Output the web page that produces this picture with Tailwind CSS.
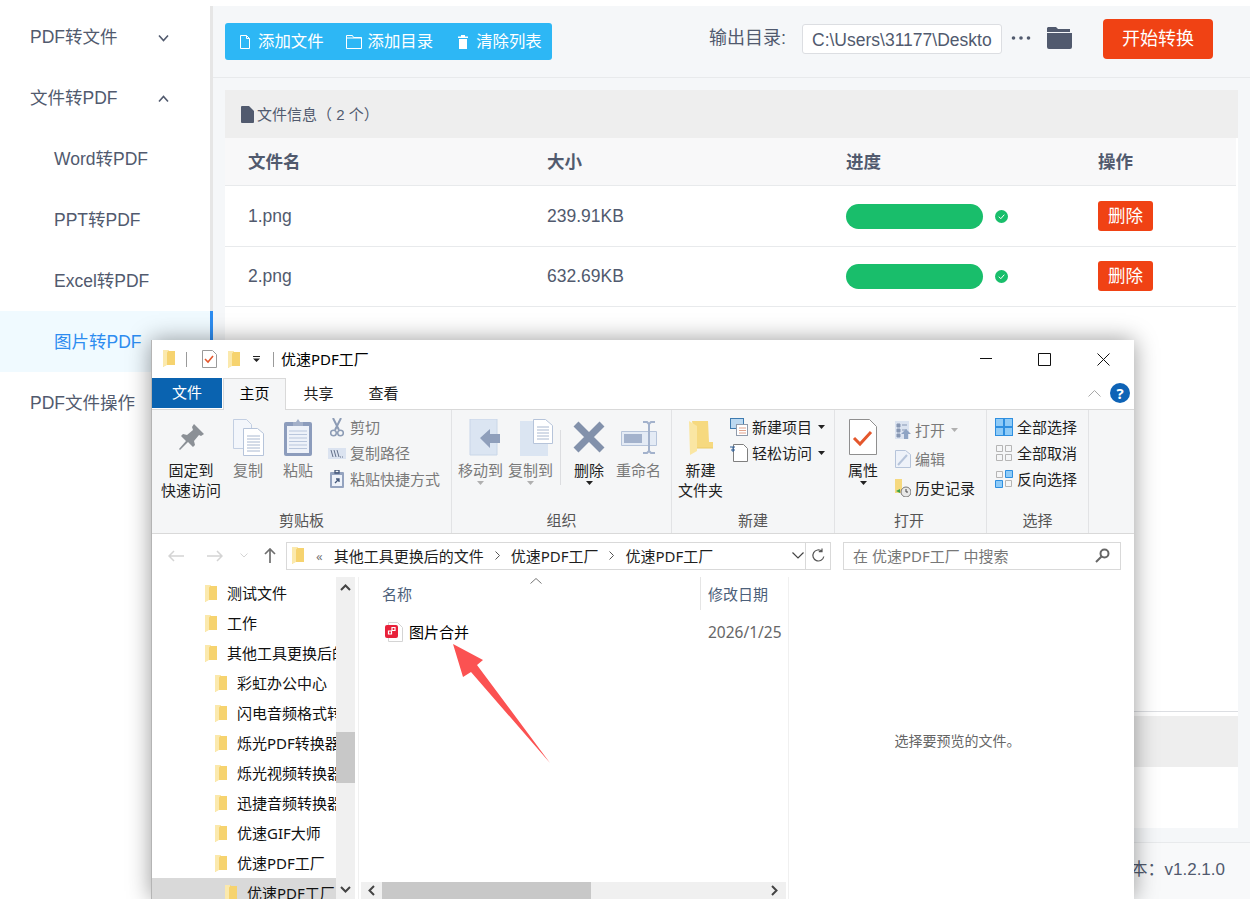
<!DOCTYPE html>
<html lang="zh-CN">
<head>
<meta charset="UTF-8" />
<title>优速PDF工厂</title>
<script src="https://cdn.jsdelivr.net/npm/@tailwindcss/browser@4"></script>
</head>
<body class="w-[1250px] h-[899px] overflow-hidden bg-white relative font-['Liberation_Sans','Noto_Sans_CJK_SC',sans-serif] text-[17.5px] text-[#515a6e]">

<svg class="hidden">
  <symbol id="fd" viewBox="0 0 12 17">
    <path d="M0 0h5l1 1h6v14H3l-3 2z" fill="#f6d36f"/>
    <path d="M0 0h5v1.500l-1 1V15l-4 2z" fill="#fbe9ad"/>
  </symbol>
</svg>

<div class="flex h-[893px] mt-[6px]">
  <!-- 左侧菜单 -->
  <aside class="w-[213px] shrink-0 border-r-[3px] border-[#e6e6e6] bg-white">
    <div class="h-[61px] flex items-center justify-between pl-[30px] pr-[41px] pt-[2px]">PDF转文件
      <svg width="11" height="8" viewBox="0 0 11 8" fill="none" stroke="#515a6e" stroke-width="1.600"><path d="M1 1.500l4.500 5 4.500-5"/></svg>
    </div>
    <div class="h-[61px] flex items-center justify-between pl-[30px] pr-[41px] pt-[2px]">文件转PDF
      <svg width="11" height="8" viewBox="0 0 11 8" fill="none" stroke="#515a6e" stroke-width="1.600"><path d="M1 6.500l4.500-5 4.500 5"/></svg>
    </div>
    <div class="h-[61px] flex items-center pl-[54px] pt-[2px]">Word转PDF</div>
    <div class="h-[61px] flex items-center pl-[54px] pt-[2px]">PPT转PDF</div>
    <div class="h-[61px] flex items-center pl-[54px] pt-[2px]">Excel转PDF</div>
    <div class="h-[61px] flex items-center pl-[54px] pt-[2px] bg-[#f0faff] text-[#2d8cf0] border-r-[3px] border-[#2d8cf0] -mr-[3px]">图片转PDF</div>
    <div class="h-[61px] flex items-center pl-[30px] pt-[2px]">PDF文件操作</div>
  </aside>

  <!-- 主区域 -->
  <main class="flex-1 flex flex-col bg-[#f5f7f9]">
    <div class="h-[72px] shrink-0 border-b border-[#e8eaec] flex items-start pl-[12px]">
      <div class="mt-[17px] h-[37px] w-[327px] bg-[#2db7f5] rounded-[3px] flex items-center pl-[15px] text-white text-[16.400px]">
        <svg width="10" height="14" viewBox="0 0 10 14" fill="none" stroke="#fff"><path d="M.5.500h6l3 3v10h-9zM6.500.500v3h3"/></svg>
        <span class="ml-[8px]">添加文件</span>
        <svg class="ml-[22px]" width="16" height="14" viewBox="0 0 16 14" fill="none" stroke="#fff"><path d="M.5 13.500V.500h6l1 2h8v11zM.5 3h15"/></svg>
        <span class="ml-[6px]">添加目录</span>
        <svg class="ml-[25px]" width="10" height="14" viewBox="0 0 10 14" fill="#fff"><path d="M3 0h4v1.500h3V3H0V1.500h3zM1 4h8v10H1z"/></svg>
        <span class="ml-[8px]">清除列表</span>
      </div>
      <div class="ml-auto flex items-start h-full">
        <span class="mt-[20px] leading-[24px] text-[18px]">输出目录:</span>
        <div class="ml-[16px] mt-[18px] w-[200px] h-[30px] bg-white border border-[#dcdee2] rounded-[3px] pl-[9px] leading-[30px] overflow-hidden whitespace-nowrap">C:\Users\31177\Deskto</div>
        <svg class="ml-[9px] mt-[29px]" width="20" height="6" viewBox="0 0 20 6" fill="#515a6e"><circle cx="2.500" cy="3" r="1.800"/><circle cx="10" cy="3" r="1.800"/><circle cx="17.500" cy="3" r="1.800"/></svg>
        <svg class="ml-[16px] mt-[21px]" width="25" height="22" viewBox="0 0 25 22" fill="#515a6e"><path d="M1 0h8l2 2h12v3H0V1zM0 6h25v14a2 2 0 0 1-2 2H2a2 2 0 0 1-2-2z"/></svg>
        <button class="ml-[31px] mt-[13px] w-[110px] h-[40px] bg-[#f04214] rounded-[4px] text-white text-[18px]">开始转换</button>
        <div class="w-[37px]"></div>
      </div>
    </div>

    <div class="px-[12px] pt-[12px]">
      <div class="h-[48px] bg-[#eeeeee] flex items-center pl-[16px] text-[15px]">
        <svg width="13" height="17" viewBox="0 0 13 17" fill="#515a6e"><path d="M1 0h7l5 5v11a1 1 0 0 1-1 1H1a1 1 0 0 1-1-1V1a1 1 0 0 1 1-1z"/></svg>
        <span class="ml-[3px] mt-[3px]">文件信息（ 2 个）</span>
      </div>
      <div class="bg-white h-[690px]">
        <div class="w-[1011px]">
          <div class="h-[48px] bg-[#f8f8f9] border-b border-[#e8eaec] grid grid-cols-[299px_299px_252px_1fr] items-center pl-[23px] pt-[2px] font-bold">
            <span>文件名</span><span>大小</span><span>进度</span><span>操作</span>
          </div>
          <div class="h-[61px] border-b border-[#e8eaec] grid grid-cols-[299px_299px_252px_1fr] items-center pl-[23px]">
            <span>1.png</span><span>239.91KB</span>
            <div class="flex items-center">
              <div class="w-[137px] h-[25px] rounded-full bg-[#19be6b]"></div>
              <svg class="ml-[12px]" width="13" height="13" viewBox="0 0 13 13"><circle cx="6.500" cy="6.500" r="6.500" fill="#19be6b"/><path d="M3.800 6.700l2 2 3.500-4" fill="none" stroke="#fff"/></svg>
            </div>
            <button class="w-[55px] h-[30px] bg-[#f04214] rounded-[3px] text-white text-[17.500px]">删除</button>
          </div>
          <div class="h-[60px] border-b border-[#e8eaec] grid grid-cols-[299px_299px_252px_1fr] items-center pl-[23px]">
            <span>2.png</span><span>632.69KB</span>
            <div class="flex items-center">
              <div class="w-[137px] h-[25px] rounded-full bg-[#19be6b]"></div>
              <svg class="ml-[12px]" width="13" height="13" viewBox="0 0 13 13"><circle cx="6.500" cy="6.500" r="6.500" fill="#19be6b"/><path d="M3.800 6.700l2 2 3.500-4" fill="none" stroke="#fff"/></svg>
            </div>
            <button class="w-[55px] h-[30px] -mt-[1px] bg-[#f04214] rounded-[3px] text-white text-[17.500px]">删除</button>
          </div>
        </div>
        <div class="h-[405px] border-b border-[#dcdee2]"></div>
        <div class="mt-[4px] h-[51px] bg-[#eeeeee]"></div>
      </div>
    </div>

    <footer class="mt-[14px] flex-1 border-t border-[#e8eaec] bg-[#f8f9fa] flex items-center justify-end pr-[25px] pb-[2px] text-[17px]">版本：v1.2.1.0</footer>
  </main>
</div>

<!-- 资源管理器窗口 -->
<section class="absolute left-[151px] top-[340px] w-[983px] h-[559px] bg-white border-l border-[#b4b4b4] shadow-[0_0_22px_rgba(0,0,0,0.4)] flex flex-col font-['Noto_Sans','Noto_Sans_CJK_SC',sans-serif] text-[15px] text-[#1e1e1e] leading-[20px]">
  <!-- 标题栏 -->
  <div class="h-[38px] shrink-0 flex items-center pl-[11px]">
    <svg class="w-[12px] h-[17px] mt-[-1px]"><use href="#fd"/></svg>
    <div class="ml-[11px] w-px h-[15px] bg-[#9a9a9a]"></div>
    <svg class="ml-[15px]" width="15" height="18" viewBox="0 0 15 18"><path d="M.5.500h10l4 4v13H.5z" fill="#fff" stroke="#9a9a9a"/><path d="M3 9l3 3 5-6" fill="none" stroke="#e4572c" stroke-width="1.600"/></svg>
    <svg class="ml-[11px] w-[12px] h-[17px]"><use href="#fd"/></svg>
    <svg class="ml-[13px]" width="7" height="6" viewBox="0 0 7 6" fill="#222"><path d="M0 0h7v1H0zM0 2.500h7L3.500 6z"/></svg>
    <div class="ml-[13px] w-px h-[15px] bg-[#9a9a9a]"></div>
    <span class="ml-[7px] text-black">优速PDF工厂</span>
    <svg class="ml-auto" width="12" height="2" viewBox="0 0 12 2" fill="#111"><path d="M0 0h12v1H0z"/></svg>
    <svg class="ml-[46px]" width="13" height="13" viewBox="0 0 13 13" fill="none" stroke="#111"><path d="M.5.500h12v12H.5z"/></svg>
    <svg class="ml-[46px] mr-[24px]" width="13" height="13" viewBox="0 0 13 13" fill="none" stroke="#111"><path d="M.5.500l12 12M12.500.500l-12 12"/></svg>
  </div>

  <!-- 选项卡 -->
  <div class="h-[32px] shrink-0 flex items-start border-b border-[#d9d9d9] relative">
    <div class="w-[70px] h-[30px] pb-[2px] bg-[#0a63b0] text-white flex items-center justify-center">文件</div>
    <div class="ml-[1px] w-[63px] h-[32px] pb-[4px] bg-[#f5f6f7] border border-b-0 border-[#d9d9d9] flex items-center justify-center text-black">主页</div>
    <div class="w-[65px] h-[30px] flex items-center justify-center">共享</div>
    <div class="w-[65px] h-[30px] flex items-center justify-center">查看</div>
    <svg class="ml-auto mt-[12px]" width="13" height="7" viewBox="0 0 13 7" fill="none" stroke="#a8a8a8"><path d="M.5 6.500l6-6 6 6"/></svg>
    <div class="ml-[9px] mr-[4px] mt-[5px] w-[20px] h-[20px] rounded-full bg-[#0e63b6] text-white font-bold text-[15px] flex items-center justify-center">?</div>
  </div>

  <!-- 功能区 -->
  <div class="h-[124px] shrink-0 bg-[#f5f6f7] border-b border-[#d9d9d9] flex text-[15px]">
    <!-- 剪贴板 -->
    <div class="w-[300px] border-r border-[#e2e3e5] flex flex-col">
      <div class="h-[104px] flex pt-[4px] pl-[9px] text-[#7a7a7a]">
        <div class="w-[60px] text-center text-[#1e1e1e]">
          <div class="h-[46px] flex items-center justify-center">
            <svg width="26" height="26" viewBox="0 0 26 26" fill="#8b9096"><path d="M16 0l10 10-3 2-2-1-5 6 1 4-2 2-5-5-8 8-1-1 7-8-5-5 2-2 4 1 6-5-1-3z"/></svg>
          </div>
          <div>固定到</div><div>快速访问</div>
        </div>
        <div class="w-[54px] text-center">
          <div class="h-[46px] flex items-center justify-center">
            <svg width="31" height="37" viewBox="0 0 31 37"><path d="M.5.500h13l5 5v24H.5z" fill="#f3f6fb" stroke="#c3cfe2"/><path d="M10.500 9.500h14l6 5v22h-20z" fill="#fff" stroke="#b6c4da"/><path d="M14 17h13M14 20h13M14 23h13M14 26h13M14 29h13M14 32h13" stroke="#a9b8d0"/></svg>
          </div>
          <div>复制</div>
        </div>
        <div class="w-[46px] text-center">
          <div class="h-[46px] flex items-center justify-center">
            <svg width="28" height="37" viewBox="0 0 28 37"><rect y="3" width="28" height="34" rx="2" fill="#8c9cbc"/><rect x="3" y="7" width="22" height="27" fill="#eef2f9"/><path d="M5 12h18M5 15.500h18M5 19h18M5 22.500h18M5 26h18M5 29.500h18" stroke="#b9c6dc"/><path d="M9 7V3h3l2-3 2 3h3v4z" fill="#a3b0c9"/></svg>
          </div>
          <div>粘贴</div>
        </div>
        <div class="ml-[9px]">
          <div class="h-[26px] flex items-center">
            <svg width="14" height="19" viewBox="0 0 14 19" fill="none" stroke="#8d9cb5" stroke-width="1.500"><path d="M3 0l6 12M11 0L5 12" stroke-width="2"/><circle cx="3.500" cy="15" r="2.800"/><circle cx="10.500" cy="15" r="2.800"/></svg>
            <span class="ml-[6px]">剪切</span>
          </div>
          <div class="h-[26px] flex items-center -ml-[2px]">
            <svg width="18" height="11" viewBox="0 0 18 11"><rect width="18" height="11" fill="#dbe3f0"/><path d="M3 2l2 7M6 2l2 7M9 2l2 7" stroke="#63708a"/><path d="M12 9h1M14 9h1" stroke="#63708a"/></svg>
            <span class="ml-[4px]">复制路径</span>
          </div>
          <div class="h-[26px] flex items-center">
            <svg width="14" height="18" viewBox="0 0 14 18"><rect y="2" width="14" height="16" rx="1" fill="#94a3bf"/><rect x="2" y="5" width="10" height="11" fill="#eef2f9"/><path d="M5 0h4v3H5zM5 13l4-4M6 9h3v3" fill="none" stroke="#44587a" stroke-width="1.300"/></svg>
            <span class="ml-[6px]">粘贴快捷方式</span>
          </div>
        </div>
      </div>
      <div class="text-center text-[#555] -mt-[4px]">剪贴板</div>
    </div>

    <!-- 组织 -->
    <div class="w-[220px] border-r border-[#e2e3e5] flex flex-col">
      <div class="h-[104px] flex pt-[4px] pl-[6px] text-[#7a7a7a]">
        <div class="w-[45px] text-center">
          <div class="h-[46px] flex items-center justify-end">
            <svg width="35" height="37" viewBox="0 0 35 37"><path d="M2 0h27v36H2z" fill="#dbe5f2" stroke="#c9d6e8"/><path d="M13 26l10-9v5h10v9H23v5z" transform="translate(-1 -7)" fill="#8f9fbb"/></svg>
          </div>
          <div class="whitespace-nowrap">移动到</div>
          <svg class="mx-auto mt-[1px]" width="7" height="4" viewBox="0 0 7 4" fill="#b0b0b0"><path d="M0 0h7L3.500 4z"/></svg>
        </div>
        <div class="ml-[5px] w-[45px] text-center">
          <div class="h-[46px] flex items-center justify-end">
            <svg width="33" height="37" viewBox="0 0 33 37"><path d="M0 2h28v35H0z" fill="#dbe5f2"/><path d="M13.500.500h12l7 6v18h-19z" fill="#fff" stroke="#b6c4da"/><path d="M17 8h12M17 11h12M17 14h12M17 17h12M17 20h12" stroke="#a9b8d0"/></svg>
          </div>
          <div class="whitespace-nowrap">复制到</div>
          <svg class="mx-auto mt-[1px]" width="7" height="4" viewBox="0 0 7 4" fill="#b0b0b0"><path d="M0 0h7L3.500 4z"/></svg>
        </div>
        <div class="ml-[7px] mt-[16px] w-px h-[55px] bg-[#dcdde0]"></div>
        <div class="ml-[12px] w-[32px] text-center text-[#1e1e1e]">
          <div class="h-[46px] flex items-center justify-center">
            <svg width="32" height="32" viewBox="0 0 32 32" stroke="#8291ab" stroke-width="7"><path d="M3 3l26 26M29 3L3 29"/></svg>
          </div>
          <div class="whitespace-nowrap">删除</div>
          <svg class="mx-auto mt-[1px]" width="7" height="4" viewBox="0 0 7 4" fill="#222"><path d="M0 0h7L3.500 4z"/></svg>
        </div>
        <div class="ml-[11px] w-[45px] text-center">
          <div class="h-[46px] flex items-center justify-center">
            <svg width="36" height="33" viewBox="0 0 36 33"><path d="M.5 10.500h35v14H.5z" fill="#e4ebf5" stroke="#b6c4da"/><rect x="3" y="13" width="18" height="9" fill="#a3b2cc"/><path d="M22 1h4l2 2 2-2h4M28 3v27M22 32h4l2-2 2 2h4" fill="none" stroke="#a3b2cc" stroke-width="2"/></svg>
          </div>
          <div class="whitespace-nowrap">重命名</div>
        </div>
      </div>
      <div class="text-center text-[#555] -mt-[4px]">组织</div>
    </div>

    <!-- 新建 -->
    <div class="w-[163px] border-r border-[#e2e3e5] flex flex-col">
      <div class="h-[104px] flex pt-[4px] pl-[6px]">
        <div class="w-[45px] text-center">
          <div class="h-[46px] flex items-center justify-center">
            <svg width="24" height="35" viewBox="0 0 24 35"><path d="M3 1h16l1 21h4v6H8z" fill="#f6d97f"/><path d="M0 1l8 5v25l-7 4z" fill="#fae6a3"/><path d="M8 28h16" stroke="#eccb68"/></svg>
          </div>
          <div>新建</div><div>文件夹</div>
        </div>
        <div class="ml-[7px]">
          <div class="h-[26px] flex items-center">
            <svg width="18" height="18" viewBox="0 0 18 18"><rect x=".5" y=".5" width="13" height="10" fill="#bcd9f1" stroke="#3e7bb0"/><rect x="6.500" y="6.500" width="11" height="11" fill="#fff" stroke="#8f9aab"/><path d="M9 10h7M9 12.500h7M9 15h7" stroke="#e0a28c"/></svg>
            <span class="ml-[4px]">新建项目</span>
            <svg class="ml-[6px]" width="7" height="4" viewBox="0 0 7 4" fill="#222"><path d="M0 0h7L3.500 4z"/></svg>
          </div>
          <div class="h-[26px] flex items-center">
            <svg width="18" height="18" viewBox="0 0 18 18"><path d="M3.500.500h10l4 4v13h-14z" fill="#fff" stroke="#7f7f7f"/><path d="M0 3h5M1 6h4M3 3v5" stroke="#2c5d97"/></svg>
            <span class="ml-[4px]">轻松访问</span>
            <svg class="ml-[6px]" width="7" height="4" viewBox="0 0 7 4" fill="#222"><path d="M0 0h7L3.500 4z"/></svg>
          </div>
        </div>
      </div>
      <div class="text-center text-[#555] -mt-[4px]">新建</div>
    </div>

    <!-- 打开 -->
    <div class="w-[152px] border-r border-[#e2e3e5] flex flex-col">
      <div class="h-[104px] flex pt-[4px] pl-[13px]">
        <div class="w-[30px] text-center">
          <div class="h-[46px] flex items-center justify-center">
            <svg width="28" height="36" viewBox="0 0 28 36"><path d="M.5.500h20l7 7v28H.5z" fill="#fff" stroke="#8f8f8f"/><path d="M5 19l6 6 11-12" fill="none" stroke="#e4572c" stroke-width="3"/></svg>
          </div>
          <div>属性</div>
          <svg class="mx-auto mt-[1px]" width="7" height="4" viewBox="0 0 7 4" fill="#222"><path d="M0 0h7L3.500 4z"/></svg>
        </div>
        <div class="ml-[17px]">
          <div class="h-[29px] mt-[1px] flex items-center text-[#7a7a7a]">
            <svg width="16" height="18" viewBox="0 0 16 18"><rect width="14" height="18" fill="#dbe3f0"/><path d="M2 3h3v3H2zM2 8h3v3H2zM2 13h3v3H2zM7 4h5M7 9h5" stroke="#8797b3" fill="#8797b3"/><path d="M11 8l5 5h-3v5H9v-5H6z" fill="#8fa4c4"/></svg>
            <span class="ml-[4px]">打开</span>
            <svg class="ml-[6px]" width="7" height="4" viewBox="0 0 7 4" fill="#b0b0b0"><path d="M0 0h7L3.500 4z"/></svg>
          </div>
          <div class="h-[29px] flex items-center text-[#7a7a7a]">
            <svg width="16" height="18" viewBox="0 0 16 18"><path d="M.5.500h10l5 4v13H.5z" fill="#eef2f9" stroke="#b6c4da"/><path d="M3 15L12 5" stroke="#b6c4da" stroke-width="2"/></svg>
            <span class="ml-[4px]">编辑</span>
          </div>
          <div class="h-[29px] flex items-center">
            <svg width="16" height="18" viewBox="0 0 16 18"><path d="M0 0h7v14H0z" fill="#f6d97f"/><circle cx="11" cy="13" r="5" fill="#e8e8e8" stroke="#777"/><path d="M11 10v3h2" fill="none" stroke="#444"/><path d="M1 12l4-2v4z" fill="#3da447"/></svg>
            <span class="ml-[4px]">历史记录</span>
          </div>
        </div>
      </div>
      <div class="pl-[59px] text-[#555] -mt-[4px]">打开</div>
    </div>

    <!-- 选择 -->
    <div class="w-[102px] border-r border-[#e2e3e5] flex flex-col">
      <div class="h-[104px] pt-[4px] pl-[8px]">
        <div class="h-[26px] flex items-center">
          <svg width="18" height="18" viewBox="0 0 18 18"><rect width="18" height="18" fill="#2e8fe0"/><path d="M1 1h7v7H1zM10 1h7v7h-7zM1 10h7v7H1zM10 10h7v7h-7z" fill="#8fcbf7"/></svg>
          <span class="ml-[4px]">全部选择</span>
        </div>
        <div class="h-[26px] flex items-center">
          <svg width="18" height="18" viewBox="0 0 18 18" fill="none" stroke="#b5b5b5"><path d="M1.500 1.500h6v6h-6zM10.500 1.500h6v6h-6zM1.500 10.500h6v6h-6zM10.500 10.500h6v6h-6z"/></svg>
          <span class="ml-[4px]">全部取消</span>
        </div>
        <div class="h-[26px] flex items-center">
          <svg width="18" height="18" viewBox="0 0 18 18"><path d="M1.500 1.500h6v6h-6zM10.500 10.500h6v6h-6z" fill="none" stroke="#b5b5b5"/><path d="M10.500.500h7v7h-7zM.5 10.500h7v7h-7z" fill="#8fcbf7" stroke="#2e8fe0"/></svg>
          <span class="ml-[4px]">反向选择</span>
        </div>
      </div>
      <div class="text-center text-[#555] -mt-[4px]">选择</div>
    </div>
  </div>

  <!-- 地址栏 -->
  <div class="h-[43px] shrink-0 flex items-center pl-[16px]">
    <svg width="16" height="12" viewBox="0 0 16 12" fill="none" stroke="#d4d4d4" stroke-width="1.500"><path d="M16 6H1M6 1L1 6l5 5"/></svg>
    <svg class="ml-[23px]" width="16" height="12" viewBox="0 0 16 12" fill="none" stroke="#d4d4d4" stroke-width="1.500"><path d="M0 6h15M10 1l5 5-5 5"/></svg>
    <svg class="ml-[17px]" width="8" height="5" viewBox="0 0 8 5" fill="none" stroke="#d4d4d4"><path d="M.5.500L4 4 7.500.500"/></svg>
    <svg class="ml-[16px]" width="12" height="15" viewBox="0 0 12 15" fill="none" stroke="#6f6f6f" stroke-width="1.700"><path d="M6 15V1M1 6l5-5 5 5"/></svg>
    <div class="ml-[10px] w-[520px] h-[28px] border border-[#d9d9d9] flex items-center pl-[5px]">
      <svg class="w-[12px] h-[17px]"><use href="#fd"/></svg>
      <span class="ml-[12px] text-[#777] text-[13px]">«</span>
      <span class="ml-[11px]">其他工具更换后的文件</span>
      <svg class="ml-[11px]" width="5" height="9" viewBox="0 0 5 9" fill="none" stroke="#555"><path d="M.5.500l4 4-4 4"/></svg>
      <span class="ml-[11px]">优速PDF工厂</span>
      <svg class="ml-[11px]" width="5" height="9" viewBox="0 0 5 9" fill="none" stroke="#555"><path d="M.5.500l4 4-4 4"/></svg>
      <span class="ml-[11px]">优速PDF工厂</span>
      <svg class="ml-auto mr-[1px]" width="12" height="7" viewBox="0 0 12 7" fill="none" stroke="#444" stroke-width="1.200"><path d="M.5.500l5.500 5.500L11.500.500"/></svg>
    </div>
    <div class="w-[25px] h-[28px] border border-l-0 border-[#d9d9d9] flex items-center justify-center">
      <svg width="15" height="15" viewBox="0 0 15 15" fill="none" stroke="#555" stroke-width="1.200"><path d="M12.800 8.500A5.500 5.500 0 1 1 11 3.300M11 .5v3.200H7.800"/></svg>
    </div>
    <div class="ml-[12px] w-[278px] h-[28px] border border-[#d9d9d9] flex items-center pl-[9px] text-[#777]">
      <span>在 优速PDF工厂 中搜索</span>
      <svg class="ml-auto mr-[10px]" width="15" height="15" viewBox="0 0 15 15" fill="none" stroke="#666" stroke-width="2"><circle cx="9.500" cy="5.500" r="4"/><path d="M6.500 8.500L1 14"/></svg>
    </div>
  </div>

  <!-- 内容区 -->
  <div class="flex-1 flex min-h-0">
    <div class="w-[184px] pt-[1px] overflow-hidden whitespace-nowrap text-[#111]">
      <div class="h-[30px] pl-[53px] flex items-center gap-[10px]"><svg class="w-[12px] h-[17px] shrink-0"><use href="#fd"/></svg>测试文件</div>
      <div class="h-[30px] pl-[53px] flex items-center gap-[10px]"><svg class="w-[12px] h-[17px] shrink-0"><use href="#fd"/></svg>工作</div>
      <div class="h-[30px] pl-[53px] flex items-center gap-[10px]"><svg class="w-[12px] h-[17px] shrink-0"><use href="#fd"/></svg>其他工具更换后的文件</div>
      <div class="h-[30px] pl-[63px] flex items-center gap-[10px]"><svg class="w-[12px] h-[17px] shrink-0"><use href="#fd"/></svg>彩虹办公中心</div>
      <div class="h-[30px] pl-[63px] flex items-center gap-[10px]"><svg class="w-[12px] h-[17px] shrink-0"><use href="#fd"/></svg>闪电音频格式转换器</div>
      <div class="h-[30px] pl-[63px] flex items-center gap-[10px]"><svg class="w-[12px] h-[17px] shrink-0"><use href="#fd"/></svg>烁光PDF转换器</div>
      <div class="h-[30px] pl-[63px] flex items-center gap-[10px]"><svg class="w-[12px] h-[17px] shrink-0"><use href="#fd"/></svg>烁光视频转换器</div>
      <div class="h-[30px] pl-[63px] flex items-center gap-[10px]"><svg class="w-[12px] h-[17px] shrink-0"><use href="#fd"/></svg>迅捷音频转换器</div>
      <div class="h-[30px] pl-[63px] flex items-center gap-[10px]"><svg class="w-[12px] h-[17px] shrink-0"><use href="#fd"/></svg>优速GIF大师</div>
      <div class="h-[30px] pl-[63px] flex items-center gap-[10px]"><svg class="w-[12px] h-[17px] shrink-0"><use href="#fd"/></svg>优速PDF工厂</div>
      <div class="h-[30px] pl-[73px] flex items-center gap-[10px] bg-[#d9d9d9]"><svg class="w-[12px] h-[17px] shrink-0"><use href="#fd"/></svg>优速PDF工厂</div>
    </div>
    <div class="w-[19px] bg-[#f0f0f0] flex flex-col items-center">
      <svg class="mt-[7px]" width="11" height="7" viewBox="0 0 11 7" fill="none" stroke="#444" stroke-width="2"><path d="M1 6l4.500-4.500L10 6"/></svg>
      <div class="mt-[141px] w-full h-[51px] bg-[#c8c8c8]"></div>
      <svg class="mt-auto mb-[6px]" width="11" height="7" viewBox="0 0 11 7" fill="none" stroke="#444" stroke-width="2"><path d="M1 1l4.500 4.500L10 1"/></svg>
    </div>
    <div class="w-[4px] border-r border-[#f0f0f0]"></div>
    <div class="w-[430px] border-r border-[#f0f0f0] flex flex-col relative">
      <svg class="absolute left-[171px] top-[1px]" width="12" height="6" viewBox="0 0 12 6" fill="none" stroke="#777"><path d="M.5 5.500L6 .5l5.500 5"/></svg>
      <div class="h-[33px] flex items-center">
        <div class="w-[342px] h-full border-r border-[#e5e5e5] pl-[23px] pt-[7px] text-[#4c607a]">名称</div>
        <span class="ml-[7px] text-[#4c607a] whitespace-nowrap">修改日期</span>
      </div>
      <div class="mt-[11px] h-[22px] flex items-center">
        <div class="w-[349px] pl-[26px] flex items-center text-black">
          <svg width="18" height="20" viewBox="0 0 18 20"><path d="M3.500.500h9l5 5v14h-14z" fill="#fff" stroke="#d4d4d4"/><rect y="3" width="13" height="13" rx="2" fill="#e8213a"/><path d="M7 5.500h3v3H7zM3.500 9h3v3h-3z" fill="none" stroke="#fff" stroke-width="1.200"/></svg>
          <span class="ml-[6px]">图片合并</span>
        </div>
        <span class="text-[#666] whitespace-nowrap text-[15.500px]">2026/1/25</span>
      </div>
      <div class="mt-auto mx-[2px] h-[17px] bg-[#f0f0f0] flex items-center">
        <div class="w-[21px] flex justify-center"><svg width="7" height="11" viewBox="0 0 7 11" fill="none" stroke="#444" stroke-width="2"><path d="M6 1L1.500 5.500 6 10"/></svg></div>
        <div class="w-[209px] h-full bg-[#c8c8c8]"></div>
        <svg class="ml-auto mr-[8px]" width="7" height="11" viewBox="0 0 7 11" fill="none" stroke="#444" stroke-width="2"><path d="M1 1l4.500 4.500L1 10"/></svg>
      </div>
    </div>
    <div class="flex-1 pt-[154px] pr-[8px] text-center text-[#666] text-[14px]">选择要预览的文件。</div>
  </div>
</section>

<!-- 红色箭头标注 -->
<svg class="absolute left-[450px] top-[640px]" width="104" height="126" viewBox="450 640 104 126">
  <path d="M453 644L483 660 477 665 550 763 471 672 463 677z" fill="#fb5252"/>
</svg>

</body>
</html>
